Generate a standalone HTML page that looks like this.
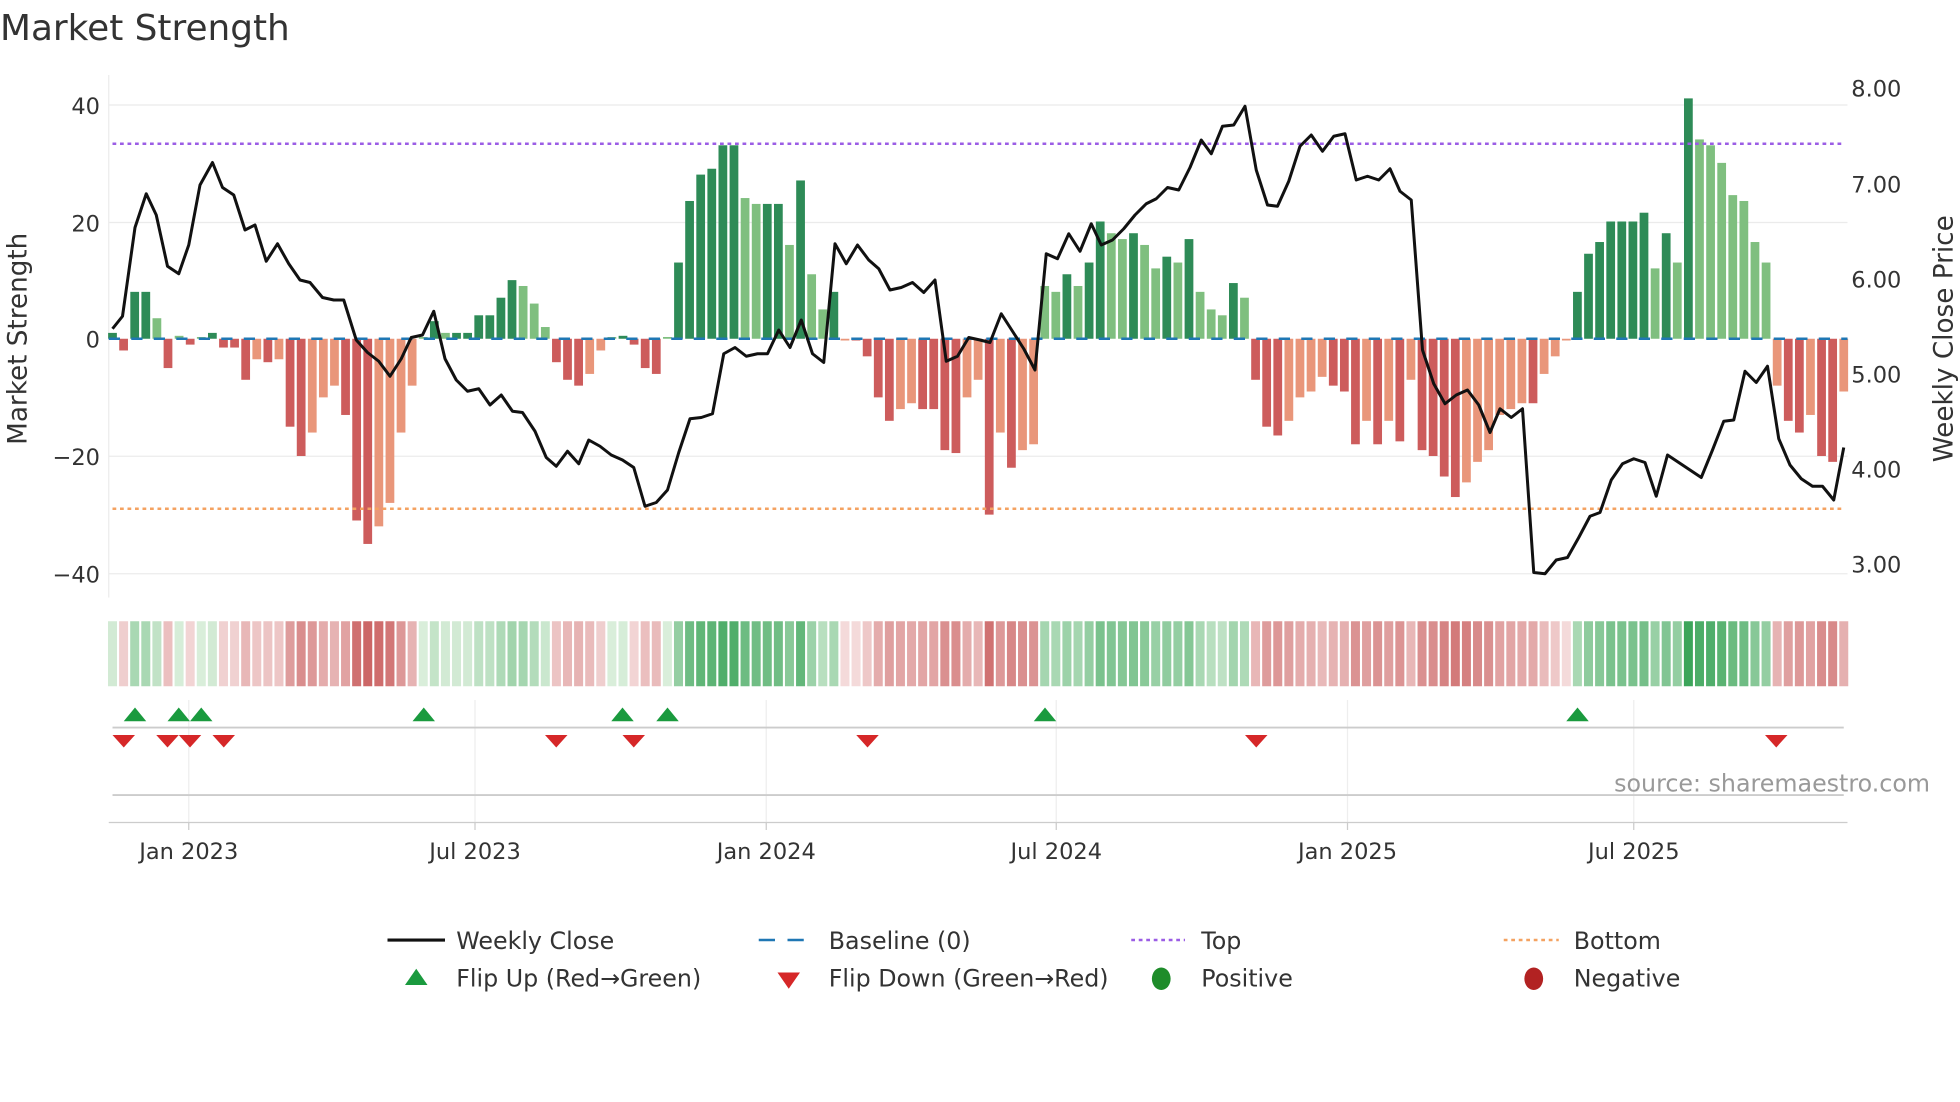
<!DOCTYPE html>
<html><head><meta charset="utf-8"><style>
html,body{margin:0;padding:0;background:#fff;width:1960px;height:1102px;overflow:hidden}
svg{display:block}
text{font-family:"DejaVu Sans","Liberation Sans",sans-serif;fill:#333}
</style></head><body>
<svg id="s" width="1960" height="1102" viewBox="0 0 1568 881.6" xmlns="http://www.w3.org/2000/svg">
<text x="0" y="32" font-size="28.7">Market Strength</text>
<g stroke="#ebebeb" stroke-width="1">
<line x1="87" x2="1478" y1="84" y2="84"/><line x1="87" x2="1478" y1="178" y2="178"/>
<line x1="87" x2="1478" y1="365" y2="365"/><line x1="87" x2="1478" y1="459" y2="459"/>
<line x1="87" x2="87" y1="60" y2="478"/>
</g>
<g font-size="18" text-anchor="end">
<text x="80" y="91">40</text><text x="80" y="185">20</text><text x="80" y="278">0</text>
<text x="80" y="372">−20</text><text x="80" y="466">−40</text></g>
<g font-size="18">
<text x="1481" y="77">8.00</text><text x="1481" y="154">7.00</text><text x="1481" y="230">6.00</text>
<text x="1481" y="306">5.00</text><text x="1481" y="382">4.00</text><text x="1481" y="458">3.00</text></g>
<text font-size="21" transform="translate(21,271) rotate(-90)" text-anchor="middle">Market Strength</text>
<text font-size="21" transform="translate(1562,271) rotate(-90)" text-anchor="middle">Weekly Close Price</text>
<g id="bars"></g>
<line x1="87" x2="1478" y1="271" y2="271" stroke="#1f77b4" stroke-width="2" stroke-dasharray="9,9"/>
<line x1="90" x2="1476" y1="115" y2="115" stroke="#9b5de5" stroke-width="2" stroke-dasharray="3,3"/>
<line x1="90" x2="1476" y1="407" y2="407" stroke="#f4a261" stroke-width="2" stroke-dasharray="3,3"/>
<polyline id="price" fill="none" stroke="#111" stroke-width="2.4" stroke-linejoin="round"/>
<g id="strip"></g>
<g stroke="#eee" stroke-width="1">
<line x1="151" x2="151" y1="560" y2="660"/><line x1="380" x2="380" y1="560" y2="660"/>
<line x1="613" x2="613" y1="560" y2="660"/><line x1="845" x2="845" y1="560" y2="660"/>
<line x1="1078" x2="1078" y1="560" y2="660"/><line x1="1307" x2="1307" y1="560" y2="660"/></g>
<line x1="90" x2="1475" y1="582" y2="582" stroke="#ccc" stroke-width="1.5"/>
<line x1="90" x2="1475" y1="636" y2="636" stroke="#ccc" stroke-width="1.5"/>
<line x1="87" x2="1478" y1="658" y2="658" stroke="#ccc" stroke-width="1"/>
<g stroke="#ccc"><line x1="151" x2="151" y1="658" y2="664"/><line x1="380" x2="380" y1="658" y2="664"/>
<line x1="613" x2="613" y1="658" y2="664"/><line x1="845" x2="845" y1="658" y2="664"/>
<line x1="1078" x2="1078" y1="658" y2="664"/><line x1="1307" x2="1307" y1="658" y2="664"/></g>
<g id="tri"></g>
<text x="1544" y="633" font-size="19" style="fill:#999" text-anchor="end">source: sharemaestro.com</text>
<g font-size="18" text-anchor="middle">
<text x="151" y="687">Jan 2023</text><text x="380" y="687">Jul 2023</text><text x="613" y="687">Jan 2024</text>
<text x="845" y="687">Jul 2024</text><text x="1078" y="687">Jan 2025</text><text x="1307" y="687">Jul 2025</text></g>
<g font-size="19">
<line x1="310" x2="356" y1="752" y2="752" stroke="#111" stroke-width="2.5"/><text x="365" y="759">Weekly Close</text>
<line x1="607" x2="651" y1="752" y2="752" stroke="#1f77b4" stroke-width="2" stroke-dasharray="13,10"/><text x="663" y="759">Baseline (0)</text>
<line x1="905" x2="948" y1="752" y2="752" stroke="#9b5de5" stroke-width="2" stroke-dasharray="3,3"/><text x="961" y="759">Top</text>
<line x1="1203" x2="1247" y1="752" y2="752" stroke="#f4a261" stroke-width="2" stroke-dasharray="3,3"/><text x="1259" y="759">Bottom</text>
<polygon points="324,788 342,788 333,775" fill="#1a9a3e"/><text x="365" y="789">Flip Up (Red→Green)</text>
<polygon points="622,778 640,778 631,791" fill="#d62728"/><text x="663" y="789">Flip Down (Green→Red)</text>
<ellipse cx="929" cy="783" rx="7.5" ry="9" fill="#1e8c2a"/><text x="961" y="789">Positive</text>
<ellipse cx="1227" cy="783" rx="7.5" ry="9" fill="#b22222"/><text x="1259" y="789">Negative</text>
</g>
</svg>
<script>
var v=[1,-2,8,8,3.5,-5,0.5,-1,0.3,1,-1.5,-1.5,-7,-3.5,-4,-3.5,-15,-20,-16,-10,-8,-13,-31,-35,-32,-28,-16,-8,0.3,3,1,1,1,4,4,7,10,9,6,2,-4,-7,-8,-6,-2,0.3,0.5,-1,-5,-6,0.3,13,23.5,28,29,33,33,24,23,23,23,16,27,11,5,8,-0.3,-0.3,-3,-10,-14,-12,-11,-12,-12,-19,-19.5,-10,-7,-30,-16,-22,-19,-18,9,8,11,9,13,20,18,17,18,16,12,14,13,17,8,5,4,9.5,7,-7,-15,-16.5,-14,-10,-9,-6.5,-8,-9,-18,-14,-18,-14,-17.5,-7,-19,-20,-23.5,-27,-24.5,-21,-19,-13,-12,-11,-11,-6,-3,-0.3,8,14.5,16.5,20,20,20,21.5,12,18,13,41,34,33,30,24.5,23.5,16.5,13,-8,-14,-16,-13,-20,-21,-9];
var n=v.length,x0=90,x1=1475,dx=(x1-x0)/(n-1),ns="http://www.w3.org/2000/svg";
var B=document.getElementById('bars'),S=document.getElementById('strip');
function mk(p,t,a){var e=document.createElementNS(ns,t);for(var k in a)e.setAttribute(k,a[k]);p.appendChild(e);}
function mix(a,b,t){return 'rgb('+[0,1,2].map(function(i){return Math.round(a[i]+(b[i]-a[i])*t)}).join(',')+')';}
for(var i=0;i<n;i++){var x=x0+i*dx,val=v[i],h=Math.abs(val)*4.69,prev=i?Math.abs(v[i-1]):0;
var up=Math.abs(val)>=prev,c;
if(val>=0)c=up?'#2e8b57':'#7fbf7f';else c=up?'#cd5c5c':'#e9967a';
mk(B,'rect',{x:x-3.5,width:7,y:val>=0?271-h:271,height:Math.max(h,1),fill:c});
var t=Math.min(Math.abs(val)/40,1);
var sc=val>=0?mix([222,240,222],[60,165,90],Math.pow(t,0.7)):mix([245,222,222],[200,90,90],Math.pow(t,0.7));
mk(S,'rect',{x:x-3.6,width:7.2,y:497,height:52,fill:sc});}
var p=[90,263,98,253,108,182,117,155,125,172,134,213,143,219,151,196,160,148,170,130,178,150,187,156,196,184,204,180,213,209,222,195,231,211,240,224,248,226,258,238,267,240,275,240,285,272,294,282,303,289,312,301,321,287,329,270,338,268,347,249,356,287,365,304,374,313,383,311,392,324,401,316,410,329,418,330,428,345,437,366,445,373,454,361,463,371,471,352,480,357,489,364,498,368,507,374,516,405,525,402,534,392,543,362,552,335,561,334,570,331,579,283,588,278,597,285,606,283,614,283,623,264,632,278,641,256,650,283,659,290,668,195,677,211,686,196,695,208,703,215,712,232,721,230,730,226,739,234,748,224,757,289,766,285,775,270,784,272,792,274,801,251,810,265,819,279,828,296,837,203,846,207,855,187,864,201,873,179,881,196,890,192,899,183,908,172,917,163,925,159,934,150,943,152,952,134,961,112,969,123,978,101,987,100,996,85,1005,136,1014,164,1022,165,1031,145,1040,117,1049,108,1058,121,1067,109,1076,107,1085,144,1094,141,1103,144,1112,135,1120,153,1129,160,1138,280,1147,307,1156,323,1165,316,1174,312,1183,324,1192,346,1200,327,1209,334,1218,327,1227,458,1236,459,1245,448,1254,446,1263,430,1272,413,1280,410,1289,384,1298,371,1307,367,1316,370,1325,397,1334,364,1343,370,1352,376,1361,382,1370,360,1379,337,1387,336,1396,297,1405,306,1414,293,1423,351,1432,372,1441,383,1450,389,1458,389,1467,400,1475,358];
var s='';for(var j=0;j<p.length;j+=2)s+=p[j]+','+p[j+1]+' ';document.getElementById('price').setAttribute('points',s);
var T=document.getElementById('tri');
[108,143,161,339,498,534,836,1262].forEach(function(x){mk(T,'polygon',{points:(x-9)+',577 '+(x+9)+',577 '+x+',566',fill:'#1a9a3e'});});
[99,134,152,179,445,507,694,1005,1421].forEach(function(x){mk(T,'polygon',{points:(x-9)+',588 '+(x+9)+',588 '+x+',598',fill:'#d62728'});});
</script>
</body></html>
